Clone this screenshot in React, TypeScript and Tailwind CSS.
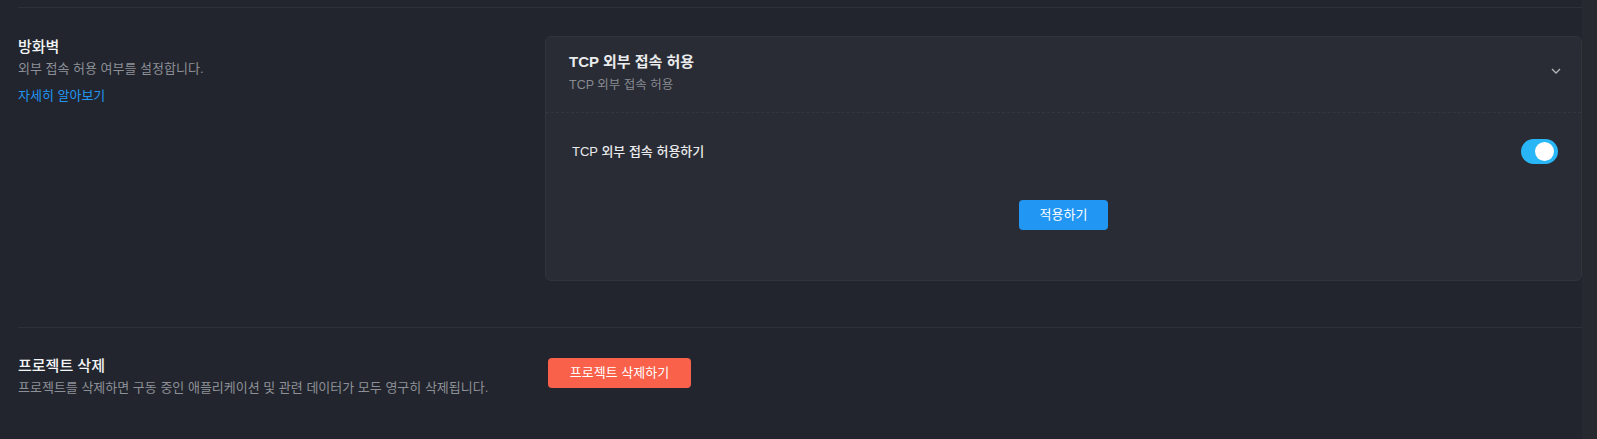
import React, { useState } from 'react';

const font = { fontFamily: '"Liberation Sans", "Noto Sans CJK KR", sans-serif' };

function Toggle({ on, onChange }: { on: boolean; onChange: () => void }) {
  return (
    <button
      onClick={onChange}
      className={`relative w-[37px] h-[25px] rounded-full ${on ? 'bg-[#29b6f6]' : 'bg-[#4a4d55]'}`}
    >
      <span
        className={`absolute top-[3px] w-[19px] h-[19px] rounded-full bg-white ${on ? 'right-[4px]' : 'left-[3px]'}`}
      />
    </button>
  );
}

export default function App() {
  const [allowTcp, setAllowTcp] = useState(true);

  return (
    <div className="flex h-[439px] bg-[#22252d] overflow-hidden" style={font}>
      <div className="flex-1 pl-[18px] pt-[7px]">
        {/* firewall */}
        <div className="border-t border-[#2e3138] pt-[28px] flex">
          <div className="w-[527px] shrink-0 pt-px">
            <h3 className="text-[15px] leading-[20px] font-medium text-[#f4f5f6]">방화벽</h3>
            <p className="mt-[3px] text-[13px] leading-[18px] text-[#8d9097]">
              외부 접속 허용 여부를 설정합니다.
            </p>
            <a href="#" className="block mt-[9px] text-[13px] leading-[18px] text-[#2196f3]">
              자세히 알아보기
            </a>
          </div>

          <div className="flex-1 rounded-md border border-[#31343b] bg-[#292c34]">
            <div className="flex items-center justify-between pl-[23px] pr-[20px] pt-[15px] pb-[19px] border-b border-dashed border-[#33363d]">
              <div>
                <div className="text-[15px] leading-[20px] font-semibold text-[#e9eaec]">TCP 외부 접속 허용</div>
                <div className="mt-[5px] text-[12.5px] leading-[16px] text-[#878a91]">TCP 외부 접속 허용</div>
              </div>
              <svg width="10" height="6" viewBox="0 0 10 6" fill="none" className="mt-[-4px]">
                <path d="M1 1l4 4 4-4" stroke="#b4b6bb" strokeWidth="1.3" />
              </svg>
            </div>

            <div className="px-[23px] pt-[26px] pb-[50px]">
              <div className="flex items-center justify-between pl-[3px]">
                <span className="text-[13px] font-medium text-[#e9eaec]">TCP 외부 접속 허용하기</span>
                <Toggle on={allowTcp} onChange={() => setAllowTcp(!allowTcp)} />
              </div>
              <div className="mt-[36px] flex justify-center">
                <button className="w-[89px] h-[30px] rounded bg-[#2196f3] text-[13px] text-white">
                  적용하기
                </button>
              </div>
            </div>
          </div>
        </div>

        {/* delete project */}
        <div className="mt-[46px] border-t border-[#2e3138] pt-[28px] flex">
          <div className="w-[530px] shrink-0">
            <h3 className="text-[15px] leading-[20px] font-medium text-[#f4f5f6]">프로젝트 삭제</h3>
            <p className="mt-[3px] text-[13px] leading-[18px] text-[#8d9097]">
              프로젝트를 삭제하면 구동 중인 애플리케이션 및 관련 데이터가 모두 영구히 삭제됩니다.
            </p>
          </div>
          <div className="pt-[2px]">
            <button className="w-[143px] h-[30px] rounded bg-[#f9614a] text-[13px] text-white">
              프로젝트 삭제하기
            </button>
          </div>
        </div>
      </div>
      <div className="w-[15px] bg-[#262930]" />
    </div>
  );
}
